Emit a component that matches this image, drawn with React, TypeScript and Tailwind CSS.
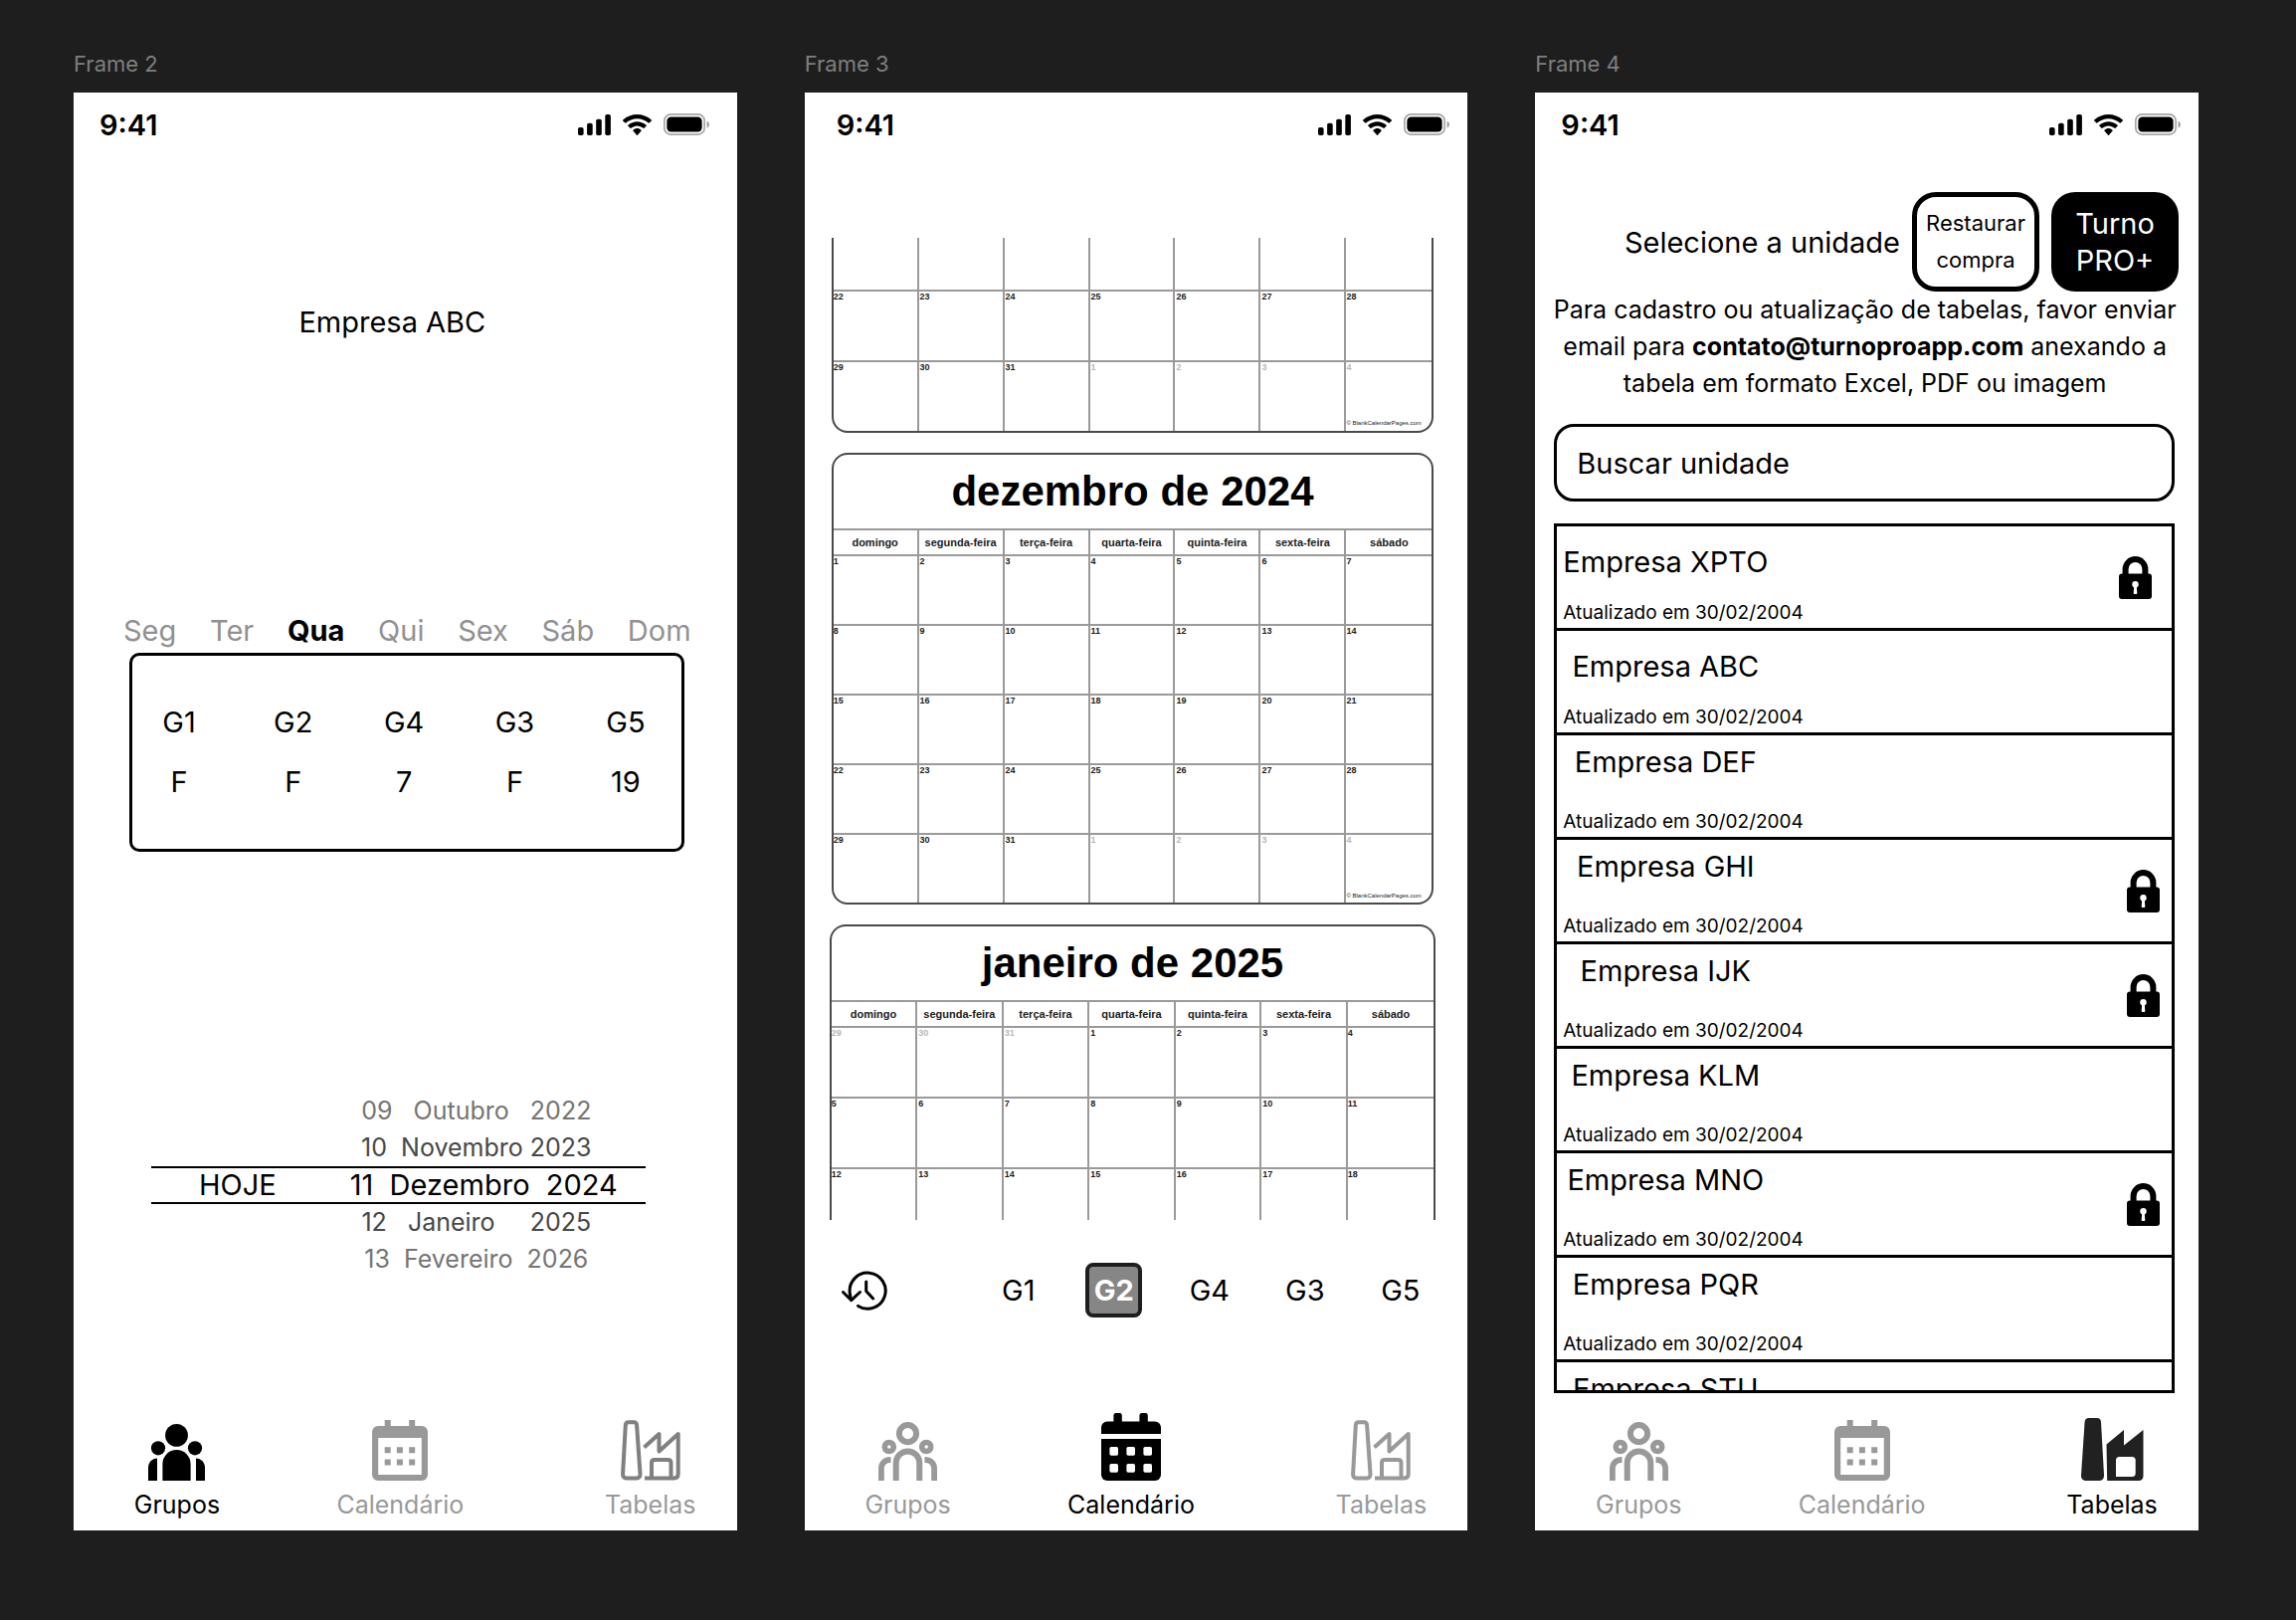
import React from "react";

type Tab = "grupos" | "calendario" | "tabelas";

/* ---------- status bar ---------- */

function SignalIcon() {
  return (
    <svg width="33" height="21" viewBox="0 0 33 21" fill="currentColor" aria-hidden="true">
      <rect x="0" y="13" width="5.6" height="8" rx="1.8" />
      <rect x="9.1" y="8.7" width="5.6" height="12.3" rx="1.8" />
      <rect x="18.2" y="4.7" width="5.6" height="16.3" rx="1.8" />
      <rect x="27.3" y="0" width="5.6" height="21" rx="1.8" />
    </svg>
  );
}

function WifiIcon() {
  return (
    <svg width="29" height="21" viewBox="0 0 17.14 12.33" fill="currentColor" aria-hidden="true">
      <path
        fillRule="evenodd"
        d="M8.5713 2.46628C11.0584 2.46639 13.4504 3.38847 15.2529 5.04195C15.3887 5.16963 15.6056 5.16802 15.7393 5.03834L17.0368 3.77487C17.1045 3.70911 17.1422 3.62004 17.1417 3.52735C17.1411 3.43467 17.1023 3.34603 17.0338 3.28104C12.3028 -1.09368 4.83907 -1.09368 0.108056 3.28104C0.0395 3.34598 0.0006 3.4346 0 3.52728C-0.0006 3.61996 0.037 3.70906 0.1047 3.77487L1.40255 5.03834C1.53615 5.16822 1.75327 5.16983 1.88893 5.04195C3.69167 3.38836 6.08395 2.46628 8.5713 2.46628ZM8.56795 6.68656C9.92527 6.68647 11.2341 7.19821 12.2403 8.12234C12.3763 8.25347 12.5907 8.25063 12.7234 8.11594L14.0106 6.79682C14.0784 6.72763 14.116 6.63372 14.115 6.53619C14.114 6.43866 14.0745 6.34561 14.0054 6.27784C10.9416 3.47059 6.19688 3.47059 3.13305 6.27784C3.06384 6.34561 3.02435 6.4387 3.02345 6.53626C3.02255 6.63382 3.06028 6.72763 3.12822 6.79682L4.41513 8.11594C4.54778 8.25063 4.76215 8.25347 4.89823 8.12234C5.90368 7.19882 7.21152 6.68713 8.56795 6.68656ZM11.0924 9.48011C11.0943 9.58546 11.0572 9.68703 10.9899 9.76084L8.81327 12.2156C8.74946 12.2877 8.66247 12.3283 8.5717 12.3283C8.48093 12.3283 8.39394 12.2877 8.33013 12.2156L6.15314 9.76084C6.08585 9.68697 6.04886 9.58537 6.05085 9.48002C6.05284 9.37467 6.09365 9.27525 6.16364 9.20537C7.55374 7.90493 9.58966 7.90493 10.9798 9.20537C11.0497 9.27531 11.0904 9.37476 11.0924 9.48011Z"
      />
    </svg>
  );
}

function BatteryIcon() {
  return (
    <svg width="46" height="22" viewBox="0 0 27.4 13" aria-hidden="true">
      <rect x="0.5" y="0.5" width="24" height="12" rx="3.8" fill="none" stroke="#000" strokeOpacity="0.35" />
      <path d="M26 4.6v4c.8-.34 1.33-1.13 1.33-2s-.53-1.66-1.33-2" fill="#000" fillOpacity="0.4" />
      <rect x="2" y="2" width="21" height="9" rx="2.5" fill="#000" />
    </svg>
  );
}

function StatusBar({ className }: { className: string }) {
  return (
    <div className={"flex h-16 items-center justify-between " + className}>
      <span className="text-[29px] leading-[37px] font-semibold">9:41</span>
      <span className="flex items-center gap-3">
        <SignalIcon />
        <WifiIcon />
        <BatteryIcon />
      </span>
    </div>
  );
}

/* ---------- tab bar icons ---------- */

function GroupsFilled() {
  return (
    <svg width="57" height="57" viewBox="0 0 57 57" fill="currentColor" aria-hidden="true">
      <circle cx="28.5" cy="11.4" r="11.4" />
      <circle cx="10" cy="24.3" r="7.1" />
      <circle cx="47" cy="24.3" r="7.1" />
      <path d="M14.4 57V40.1a14.1 14.1 0 0 1 28.2 0V57z" />
      <path d="M9 34.4V57H0V43.8c0-5.2 3.8-9.2 9-9.4z" />
      <path d="M48 34.4V57h9V43.8c0-5.2-3.8-9.2-9-9.4z" />
    </svg>
  );
}

function GroupsOutline() {
  return (
    <svg width="59" height="59" viewBox="0 0 59 59" fill="none" stroke="currentColor" aria-hidden="true">
      <circle cx="29.5" cy="11.6" r="8.6" strokeWidth="6" />
      <circle cx="10.8" cy="25" r="4.5" strokeWidth="5.6" />
      <circle cx="48.2" cy="25" r="4.5" strokeWidth="5.6" />
      <path d="M17.7 59V41.3a11.8 11.8 0 0 1 23.6 0V59" strokeWidth="6" />
      <path d="M2.9 59V46.6c0-5.2 3.6-8.6 9.6-8.6" strokeWidth="5.8" />
      <path d="M56.1 59V46.6c0-5.2-3.6-8.6-9.6-8.6" strokeWidth="5.8" />
    </svg>
  );
}

function CalendarOutline() {
  return (
    <svg width="56" height="61" viewBox="0 0 56 61" fill="currentColor" aria-hidden="true">
      <path
        fillRule="evenodd"
        d="M12.7 0h6v6h18.5V0h6v6H50a6 6 0 0 1 6 6v43a6 6 0 0 1-6 6H6a6 6 0 0 1-6-6V12a6 6 0 0 1 6-6h6.7zM6.2 18v37h43.6V18z"
      />
      <path d="M12.7 27.2h6v6h-6zM24.9 27.2h6v6h-6zM37.2 27.2h6v6h-6zM12.7 39.5h6v6h-6zM24.9 39.5h6v6h-6zM37.2 39.5h6v6h-6z" />
    </svg>
  );
}

function CalendarFilled() {
  return (
    <svg width="60" height="68" viewBox="0 0 60 68" fill="currentColor" aria-hidden="true">
      <rect x="12.4" y="0" width="8.4" height="14" rx="2.4" />
      <rect x="38.4" y="0" width="8.4" height="14" rx="2.4" />
      <path d="M6 8.4h48a6 6 0 0 1 6 6V21H0v-6.6a6 6 0 0 1 6-6z" />
      <path d="M0 26h60v36a6 6 0 0 1-6 6H6a6 6 0 0 1-6-6z" />
      <g fill="#fff">
        <rect x="8.4" y="34" width="8.6" height="8.7" rx="1.6" />
        <rect x="25.4" y="34" width="8.6" height="8.7" rx="1.6" />
        <rect x="42.4" y="34" width="8.6" height="8.7" rx="1.6" />
        <rect x="8.4" y="51" width="8.6" height="8.7" rx="1.6" />
        <rect x="25.4" y="51" width="8.6" height="8.7" rx="1.6" />
        <rect x="42.4" y="51" width="8.6" height="8.7" rx="1.6" />
      </g>
    </svg>
  );
}

function FactoryOutline() {
  return (
    <svg width="60" height="61" viewBox="0 0 60 61" fill="none" stroke="currentColor" strokeWidth="4" aria-hidden="true">
      <path d="M7.8 2.2h5.2c2 0 3 1.3 3.1 3L19.5 54c.2 2.7-1.2 4.5-3.6 4.5H5.6c-2.4 0-3.7-1.8-3.5-4.5L4.8 5.2c.1-1.7 1-3 3-3z" />
      <path d="M23.5 27.5 38.5 14v17.5L57.7 14v40c0 2.9-1.6 4.5-4.2 4.5H24" strokeLinejoin="round" />
      <path d="M31 58V43c0-2 1-3 3-3h13.5c2 0 3 1 3 3v15" />
    </svg>
  );
}

function FactoryFilled() {
  return (
    <svg width="63" height="63" viewBox="0 0 63 63" fill="#212121" aria-hidden="true">
      <path d="M7.8 0h8c2.500 0 4 1.600 4.200 4l3 53.500c.1 3.400-1.500 5.500-4.300 5.500H4.300C1.400 63-.2 60.900 0 57.500L3.600 4C3.800 1.600 5.300 0 7.800 0z" />
      <path
        fillRule="evenodd"
        d="M25.500 26.500 43 12v15.500L62.500 12v46c0 3.200-1.800 5-4.800 5H26.200zM38.500 39a3.500 3.500 0 0 0-3.500 3.500V59h16.200a3.500 3.500 0 0 0 3.500-3.500v-13a3.500 3.500 0 0 0-3.500-3.500z"
      />
    </svg>
  );
}

function TabBar({ active, factoryClass = "text-[#999999]" }: { active: Tab; factoryClass?: string }) {
  const items = [
    {
      id: "grupos",
      label: "Grupos",
      icon: active === "grupos" ? <GroupsFilled /> : <GroupsOutline />,
      place: "",
    },
    {
      id: "calendario",
      label: "Calendário",
      icon: active === "calendario" ? <CalendarFilled /> : <CalendarOutline />,
      place: "",
    },
    {
      id: "tabelas",
      label: "Tabelas",
      icon:
        active === "tabelas" ? (
          <FactoryFilled />
        ) : (
          <span className={factoryClass}>
            <FactoryOutline />
          </span>
        ),
      place: "pl-11",
    },
  ];
  return (
    <nav className="mt-auto grid grid-cols-[208fr_241fr_218fr] pb-[7px]">
      {items.map((item) => (
        <button
          key={item.id}
          type="button"
          aria-current={item.id === active ? "page" : undefined}
          className={
            "flex flex-col items-center justify-end gap-1.5 " +
            item.place +
            (item.id === active ? " text-black" : " text-[#999999]")
          }
        >
          {item.icon}
          <span className="text-[25px] leading-[37px]">{item.label}</span>
        </button>
      ))}
    </nav>
  );
}

/* ---------- frame wrapper ---------- */

function Frame({ title, children }: { title: string; children: React.ReactNode }) {
  return (
    <section className="flex min-w-0 flex-col">
      <h2 className="mb-[15px] text-[22px] leading-7 text-[#7f7f7f]">{title}</h2>
      <div className="flex grow flex-col bg-white text-black">{children}</div>
    </section>
  );
}

/* ---------- groups screen ---------- */

const weekdays = ["Seg", "Ter", "Qua", "Qui", "Sex", "Sáb", "Dom"];
const shifts = [
  ["G1", "F"],
  ["G2", "F"],
  ["G4", "7"],
  ["G3", "F"],
  ["G5", "19"],
];

function GroupsScreen() {
  return (
    <Frame title="Frame 2">
      <StatusBar className="pr-7 pl-[26px]" />
      <h3 className="mt-[148px] pr-[26px] text-center text-[29px] leading-[37px]">Empresa ABC</h3>

      <div className="mt-[273px] flex justify-between pr-[46px] pl-[50px] text-[29px] leading-[37px] text-[#919191]">
        {weekdays.map((day) => (
          <button key={day} type="button" className={day === "Qua" ? "font-bold text-black" : ""}>
            {day}
          </button>
        ))}
      </div>

      <div className="mt-1 mr-[53px] ml-[56px] rounded-[10px] border-3 border-black pt-[36px] pb-[38px]">
        <table className="w-full table-fixed text-center text-[29px] leading-[37px]">
          <thead>
            <tr>
              {shifts.map(([group]) => (
                <th key={group} scope="col" className="h-[60px] font-normal first:w-[106px] first:pr-3">
                  {group}
                </th>
              ))}
            </tr>
          </thead>
          <tbody>
            <tr>
              {shifts.map(([group, value]) => (
                <td key={group} className="h-[60px] first:pr-3">
                  {value}
                </td>
              ))}
            </tr>
          </tbody>
        </table>
      </div>

      <div className="mt-[242px] text-center text-[25px] leading-[37px] whitespace-pre">
        <p className="pl-[143px] text-[#757575]">{"09   Outubro   2022"}</p>
        <p className="pl-[143px] text-[#484848]">{"10  Novembro 2023"}</p>
        <div className="mr-[92px] ml-[78px] flex items-center gap-[74px] border-y-2 border-black pl-12 text-[29px] leading-[34px]">
          <button type="button">HOJE</button>
          <span>{"11  Dezembro  2024"}</span>
        </div>
        <p className="pl-[143px] text-[#484848]">{"12   Janeiro     2025"}</p>
        <p className="pl-[143px] text-[#757575]">{"13  Fevereiro  2026"}</p>
      </div>

      <TabBar active="grupos" factoryClass="text-[#808080]" />
    </Frame>
  );
}

/* ---------- calendar screen ---------- */

type Day = { n: string; out?: boolean };
const run = (from: number, to: number, out = false): Day[] =>
  Array.from({ length: to - from + 1 }, (_, i) => ({ n: String(from + i), out }));
const weeks = (days: Day[]) =>
  Array.from({ length: Math.ceil(days.length / 7) }, (_, i) => days.slice(i * 7, i * 7 + 7));

const dayNames = [
  "domingo",
  "segunda-feira",
  "terça-feira",
  "quarta-feira",
  "quinta-feira",
  "sexta-feira",
  "sábado",
];
const blankWeek: Day[] = Array.from({ length: 7 }, () => ({ n: "" }));

function Month({
  title,
  rows,
  frame,
  heights,
  credit,
}: {
  title?: string;
  rows: Day[][];
  frame: string;
  heights: string[];
  credit?: boolean;
}) {
  return (
    <div className={"overflow-hidden border-[#4a4a4a] " + frame}>
      {title && (
        <h3 className="text-center text-[42px] leading-[74px] font-bold">{title}</h3>
      )}
      <table className="w-full table-fixed border-separate border-spacing-0">
        {title && (
          <thead>
            <tr>
              {dayNames.map((name) => (
                <th
                  key={name}
                  scope="col"
                  className="h-[26px] border-t-2 border-r-2 border-[#9a9a9a] p-0 text-center text-[11px] leading-4 font-bold text-[#222222] last:border-r-0"
                >
                  {name}
                </th>
              ))}
            </tr>
          </thead>
        )}
        <tbody>
          {rows.map((week, r) => (
            <tr key={r}>
              {week.map((day, c) => (
                <td
                  key={c}
                  className={
                    "border-r-2 border-[#9a9a9a] p-0 align-top text-[9px] leading-[10px] font-bold last:border-r-0 " +
                    heights[r] +
                    (day.n ? " border-t-2" : "") +
                    (day.out ? " text-[#b8b8b8]" : " text-[#1c1c1c]")
                  }
                >
                  <span className={c > 0 && c < 6 ? "block pl-px" : "block"}>{day.n}</span>
                  {credit && r === rows.length - 1 && c === 6 && (
                    <span className="block pt-[47px] text-[6px] leading-[8px] font-normal whitespace-nowrap text-[#222222]">
                      © BlankCalendarPages.com
                    </span>
                  )}
                </td>
              ))}
            </tr>
          ))}
        </tbody>
      </table>
    </div>
  );
}

function HistoryIcon() {
  return (
    <svg
      width="46"
      height="40"
      viewBox="0 0 46 40"
      fill="none"
      stroke="currentColor"
      strokeWidth="3"
      strokeLinecap="round"
      strokeLinejoin="round"
      aria-hidden="true"
    >
      <path d="M16.6 35.4A18 18 0 1 0 8.3 22.5c.2 2.3.6 4.5 1.5 6.7" />
      <path d="M1.5 21.5 9.8 29.7 18.5 21.5" />
      <path d="M24.7 11v9.4l7 7.6" />
    </svg>
  );
}

const groups = ["G1", "G2", "G4", "G3", "G5"];

function CalendarScreen() {
  return (
    <Frame title="Frame 3">
      <StatusBar className="pr-[18px] pl-8" />
      <div className="mt-[82px] mr-8 ml-[25px] flex flex-col gap-5 font-['Liberation_Sans',Arial,sans-serif]">
        <Month
          frame="mx-0.5 rounded-b-2xl border-x-2 border-b-2"
          rows={[blankWeek, ...weeks([...run(22, 31), ...run(1, 4, true)])]}
          heights={["h-[52px]", "h-[71px]", "h-[71px]"]}
          credit
        />
        <Month
          title="dezembro de 2024"
          frame="mx-0.5 rounded-2xl border-2"
          rows={weeks([...run(1, 31), ...run(1, 4, true)])}
          heights={["h-[70px]", "h-[70px]", "h-[70px]", "h-[70px]", "h-[70px]"]}
          credit
        />
        <Month
          title="janeiro de 2025"
          frame="rounded-t-2xl border-x-2 border-t-2"
          rows={weeks([...run(29, 31, true), ...run(1, 18)])}
          heights={["h-[71px]", "h-[71px]", "h-[53px]"]}
        />
      </div>

      <div className="mt-[43px] flex items-center justify-between pr-[39px] pl-[37px]">
        <button type="button" aria-label="Histórico">
          <HistoryIcon />
        </button>
        <div className="flex gap-[39px] text-[29px] leading-[37px]">
          {groups.map((group) => (
            <button
              key={group}
              type="button"
              aria-pressed={group === "G2"}
              className={
                group === "G2"
                  ? "h-[55px] w-[57px] rounded-lg border-4 border-[#1e1e1e] bg-[#868686] font-bold text-white"
                  : "h-[55px] w-[57px]"
              }
            >
              {group}
            </button>
          ))}
        </div>
      </div>

      <TabBar active="calendario" />
    </Frame>
  );
}

/* ---------- tables screen ---------- */

function LockIcon() {
  return (
    <svg width="33" height="43" viewBox="0 0 33 43" fill="none" aria-hidden="true">
      <path d="M6.6 20v-7a9.9 9.9 0 0 1 19.8 0v7" stroke="#000" strokeWidth="6" />
      <rect x="0" y="17.5" width="33" height="25.5" rx="3" fill="#000" />
      <circle cx="16.5" cy="28.3" r="3.2" fill="#fff" />
      <path d="M15.3 29h2.4l.6 8a1 1 0 0 1-1 1h-1.6a1 1 0 0 1-1-1z" fill="#fff" />
    </svg>
  );
}

const units = [
  { name: "Empresa XPTO", locked: true, tall: true },
  { name: "Empresa ABC", tall: true },
  { name: "Empresa DEF" },
  { name: "Empresa GHI", locked: true },
  { name: "Empresa IJK", locked: true },
  { name: "Empresa KLM" },
  { name: "Empresa MNO", locked: true },
  { name: "Empresa PQR" },
  { name: "Empresa STU" },
];

function TablesScreen() {
  return (
    <Frame title="Frame 4">
      <StatusBar className="pr-[18px] pl-[26px]" />
      <div className="mt-[36px] flex items-center justify-end gap-3 pr-5">
        <h3 className="text-[29px] leading-[37px]">Selecione a unidade</h3>
        <button
          type="button"
          className="h-[100px] w-32 rounded-3xl border-5 border-black text-[22px] leading-[37px]"
        >
          Restaurar compra
        </button>
        <button
          type="button"
          className="h-[100px] w-32 rounded-3xl bg-black px-5 text-[29px] leading-[37px] text-white"
        >
          Turno PRO+
        </button>
      </div>

      <p className="pr-4 pl-3 text-center text-[25px] leading-[37px]">
        Para cadastro ou atualização de tabelas, favor enviar email para{" "}
        <a href="mailto:contato@turnoproapp.com" className="font-bold">
          contato@turnoproapp.com
        </a>{" "}
        anexando a tabela em formato Excel, PDF ou imagem
      </p>

      <input
        type="text"
        aria-label="Buscar unidade"
        placeholder="Buscar unidade"
        className="mt-[22px] mr-6 ml-[19px] h-[78px] rounded-[20px] border-3 border-black px-5 text-[29px] leading-[37px] placeholder:text-black"
      />

      <ul className="mt-[22px] mr-6 ml-[19px] max-h-[874px] overflow-hidden border-3 border-black">
        {units.map((unit) => (
          <li key={unit.name} className="border-b-3 border-black">
            <button
              type="button"
              className={
                unit.tall
                  ? "flex h-[102px] w-full items-center justify-between pr-5 pl-1.5 text-left"
                  : "flex h-[102px] w-full items-center justify-between pr-3 pl-1.5 text-left"
              }
            >
              <span
                className={
                  unit.tall
                    ? "flex h-full flex-col justify-between pt-[17px] pb-[3px]"
                    : "flex h-full flex-col justify-between pt-2 pb-[3px]"
                }
              >
                <span className="w-[206px] text-center text-[29px] leading-[37px] whitespace-nowrap">
                  {unit.name}
                </span>
                <span className="text-[19px] leading-6">Atualizado em 30/02/2004</span>
              </span>
              {unit.locked && <LockIcon />}
            </button>
          </li>
        ))}
      </ul>

      <TabBar active="tabelas" />
    </Frame>
  );
}

export default function App() {
  return (
    <main className="flex min-h-screen flex-col bg-[#1e1e1e] pt-[50px] pr-[98px] pb-[90px] pl-[74px] font-['Inter',sans-serif]">
      <div className="grid grow grid-cols-3 gap-[68px]">
        <GroupsScreen />
        <CalendarScreen />
        <TablesScreen />
      </div>
    </main>
  );
}
